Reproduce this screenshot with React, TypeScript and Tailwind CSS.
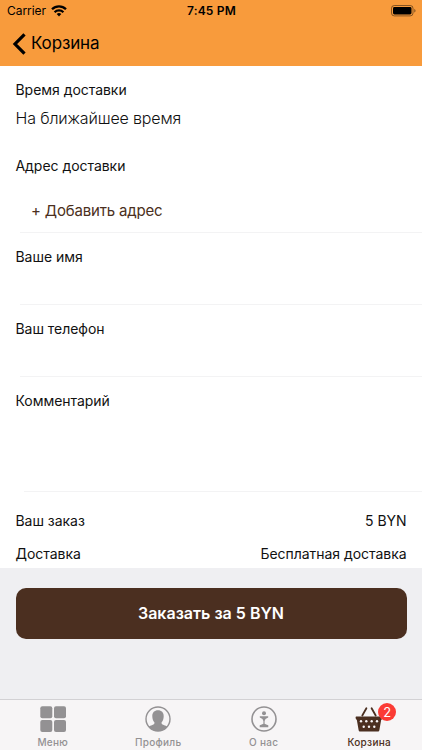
import { clsx } from "clsx";
import type { ReactNode } from "react";

interface FieldProps {
  label: string;
  className?: string;
  children?: ReactNode;
}

function Field({ label, className, children }: FieldProps) {
  return (
    <section className={clsx("flex flex-col", className)}>
      <h2 className="pl-[15.5px] text-[14px] leading-5 tracking-[-0.04px]">{label}</h2>
      {children}
    </section>
  );
}

function Divider({ className }: { className?: string }) {
  return <div className={clsx("mt-auto h-px shrink-0 bg-[#f3f3f4]", className)} />;
}

function WifiIcon() {
  return (
    <svg width="16" height="12" viewBox="0 0 16 12" fill="none" stroke="#000" strokeWidth="2.3">
      <path d="M1 4.3a10 10 0 0 1 14 0" />
      <path d="M3.6 7.2a6.3 6.3 0 0 1 8.8 0" />
      <path d="M8 11.4 5.7 9.1a3.3 3.3 0 0 1 4.6 0Z" fill="#000" stroke="none" />
    </svg>
  );
}

function BatteryIcon() {
  return (
    <svg width="26" height="12" viewBox="0 0 26 12">
      <rect x="1.5" y="0.5" width="21.5" height="10.4" rx="2.8" fill="none" stroke="#000" strokeOpacity="0.45" />
      <rect x="3" y="2" width="18.5" height="7.4" rx="1.4" />
      <path d="M24.3 4v3.6c.8-.3 1.2-1 1.2-1.8s-.4-1.5-1.2-1.8Z" opacity="0.5" />
    </svg>
  );
}

function MenuIcon() {
  return (
    <svg width="26" height="26" viewBox="0 0 26 26" fill="currentColor">
      <rect x="0.3" y="0.3" width="12" height="12" rx="2" />
      <rect x="14" y="0.3" width="12" height="12" rx="2" />
      <rect x="0.3" y="14" width="12" height="12" rx="2" />
      <rect x="14" y="14" width="12" height="12" rx="2" />
    </svg>
  );
}

function ProfileIcon() {
  return (
    <svg width="26" height="26" viewBox="0 0 26 26">
      <circle cx="13" cy="13" r="12" fill="none" stroke="currentColor" strokeWidth="1.4" />
      <path
        fill="currentColor"
        d="M13 4.3c3.6 0 5.7 2.3 5.7 5.9 0 2.6-.8 4.7-2.1 6.1-.2 1.5.3 2.1 2.1 2.7 1.7.6 2.7 1 3.5 1.7A11.8 11.8 0 0 1 13 25a11.8 11.8 0 0 1-9.2-4.3c.8-.7 1.8-1.1 3.5-1.7 1.8-.6 2.3-1.2 2.1-2.7-1.3-1.4-2.1-3.500-2.100-6.100 0-3.600 2.100-5.900 5.700-5.900Z"
      />
    </svg>
  );
}

function AboutIcon() {
  return (
    <svg width="26" height="26" viewBox="0 0 26 26" fill="currentColor">
      <circle cx="13" cy="13" r="12" fill="none" stroke="currentColor" strokeWidth="1.6" />
      <circle cx="13" cy="7.2" r="2" />
      <path d="M8.8 10.300h8.400v1.200l-2.700 1.500-.9 2v2.700l2.300 1 1.400.6v1.900H8.700v-1.900l1.400-.6 2.300-1V15l-.9-2-2.700-1.500Z" />
    </svg>
  );
}

function BasketIcon() {
  return (
    <svg width="28" height="26" viewBox="0 0 28 26">
      <g stroke="currentColor" strokeWidth="1.8" strokeLinecap="round">
        <path d="M11.4 2.2 7.3 9.5" />
        <path d="m16.6 2.2 4.1 7.3" />
      </g>
      <path
        fill="currentColor"
        d="M1.7 10.6h24.6c.8 0 1.2.5 1.1 1.2l-.3 1.1c-.1.5-.5.8-.9.9l-1.8 10.2c-.2 1-.7 1.5-1.7 1.5H5.3c-1 0-1.5-.5-1.7-1.5L1.8 13.8c-.4-.1-.8-.4-.9-.9l-.3-1.1c-.1-.7.3-1.2 1.1-1.2Z"
      />
      <g fill="#f7f5f6">
        <circle cx="6" cy="15.2" r="1.2" />
        <circle cx="11.3" cy="15.2" r="1.2" />
        <circle cx="16.7" cy="15.2" r="1.2" />
        <circle cx="22" cy="15.2" r="1.2" />
        <circle cx="8.7" cy="20.7" r="1.2" />
        <circle cx="14" cy="20.7" r="1.2" />
        <circle cx="19.3" cy="20.7" r="1.2" />
      </g>
    </svg>
  );
}

export default function App() {
  const tabs = [
    { label: "Меню", icon: <MenuIcon /> },
    { label: "Профиль", icon: <ProfileIcon /> },
    { label: "О нас", icon: <AboutIcon /> },
    { label: "Корзина", icon: <BasketIcon />, active: true, badge: 2 },
  ];

  return (
    <div className="flex h-[750px] w-[422px] flex-col overflow-hidden bg-[#efeff2] font-['Inter','Liberation_Sans',sans-serif] text-[#111]">
      <header className="h-[65.5px] shrink-0 bg-[#f89b3c] text-black">
        <div className="grid h-[22px] grid-cols-3 items-center pr-1.5 pl-[7px]">
          <div className="flex items-center gap-[5px] text-[12px] tracking-[-0.05px]">
            <span>Carrier</span>
            <WifiIcon />
          </div>
          <div className="text-center text-[12px] font-semibold tracking-[0.2px]">7:45 PM</div>
          <div className="flex justify-end">
            <BatteryIcon />
          </div>
        </div>
        <button className="flex h-[43px] items-center gap-1 pl-3 text-[17px] tracking-[-0.15px]">
          <svg width="15" height="22" viewBox="0 0 15 22" fill="none" stroke="#000" strokeWidth="3.2">
            <path d="M12.5 1.3 3 11l9.5 9.7" />
          </svg>
          Корзина
        </button>
      </header>

      <main className="flex h-[502px] shrink-0 flex-col bg-white">
        <Field label="Время доставки" className="h-[76px] pt-3.5">
          <p className="mt-1.5 pl-[15.5px] text-[16px] leading-6 font-light tracking-[-0.15px]">На ближайшее время</p>
        </Field>
        <Field label="Адрес доставки" className="h-[91px] pt-3.5">
          <button className="mt-[23px] self-start pl-[31px] text-[15px] leading-6 tracking-[-0.17px] text-[#4b2f20]">
            + Добавить адрес
          </button>
          <Divider className="ml-5" />
        </Field>
        <Field label="Ваше имя" className="h-[72px] pt-3.5">
          <Divider className="ml-5" />
        </Field>
        <Field label="Ваш телефон" className="h-[72px] pt-3.5">
          <Divider className="ml-5" />
        </Field>
        <Field label="Комментарий" className="h-[115px] pt-3.5">
          <Divider className="ml-6" />
        </Field>
        <dl className="flex flex-col gap-[13px] px-[15.5px] pt-[19px] text-[14px] leading-5 tracking-[-0.04px]">
          <div className="flex justify-between">
            <dt>Ваш заказ</dt>
            <dd>5 BYN</dd>
          </div>
          <div className="flex justify-between">
            <dt>Доставка</dt>
            <dd>Бесплатная доставка</dd>
          </div>
        </dl>
      </main>

      <div className="flex-1 px-[15.5px] pt-5">
        <button className="h-[51px] w-full rounded-[10px] bg-[#4b2f20] text-[16px] font-semibold text-white">
          Заказать за 5 BYN
        </button>
      </div>

      <nav className="grid h-[51px] shrink-0 grid-cols-4 border-t border-[#d2d1d4] bg-[#f7f5f6]">
        {tabs.map((tab) => (
          <button
            key={tab.label}
            className={clsx("flex flex-col items-center pt-1.5", tab.active ? "text-[#4b2f20]" : "text-[#939193]")}
          >
            <span className="relative">
              {tab.icon}
              {tab.badge && (
                <span className="absolute -top-[3px] left-[23px] flex size-[18px] items-center justify-center rounded-full bg-[#fb3b35] text-[13px] leading-none text-white">
                  {tab.badge}
                </span>
              )}
            </span>
            <span className="mt-1 text-[10px] leading-3 font-medium tracking-[0.3px]">{tab.label}</span>
          </button>
        ))}
      </nav>
    </div>
  );
}
